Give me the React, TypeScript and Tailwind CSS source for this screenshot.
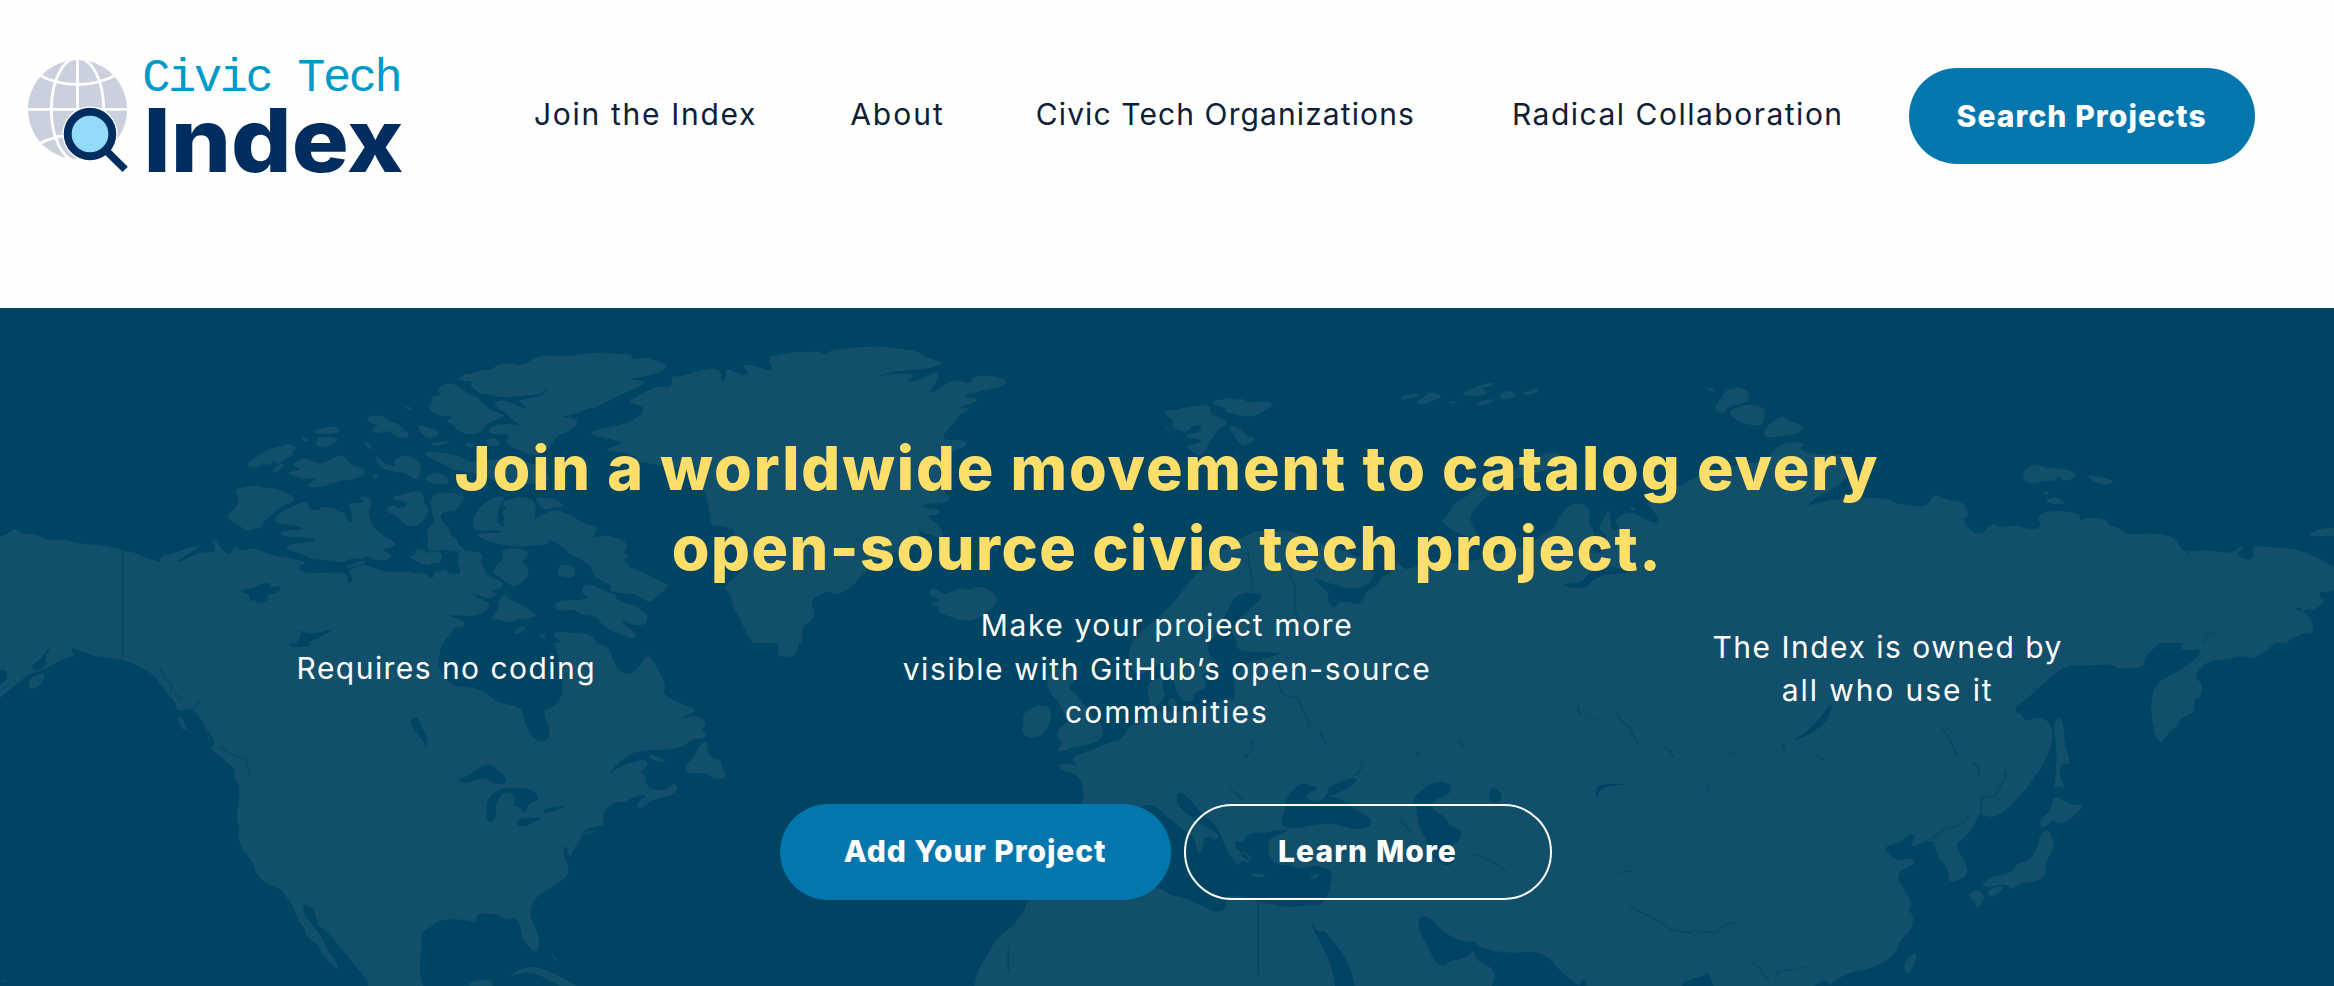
import React from "react";

type Tile = { x: number; y: number; land: string[]; water: string[]; rivers: string[] };

const TILE_W = 1568;
const TILE_H = 1029;

/* The world map is split into six tiles; every outline is a list of x,y pairs. */
const tiles: Tile[] = [
  {
    x: 0,
    y: 300,
    land: [
      "0,708 12,706 25,690 34,686 44,697 48,706 58,700 68,704 78,704 86,716 98,720 125,717 150,727 175,733 195,734 215,740 245,748 250,754 270,756 285,770 310,780 320,788 325,768 340,764 355,757 375,745 395,737 405,736 398,746 378,762 358,782 356,786 375,778 390,762 412,756 430,757 434,748 424,717 436,724 442,740 456,760 464,762 475,733 478,752 495,749 510,744 530,755 550,768 580,774 612,784 616,790 600,798 603,812 620,820 660,818 690,816 700,830 698,848 705,850 710,838 704,822 700,810 720,800 735,793 750,805 775,813 800,817 828,815 835,822 858,818 862,832 872,834 872,820 885,814 895,806 905,824 925,822 926,806 918,790 924,770 915,750 930,752 946,750 955,756 962,755 972,770 965,785 972,800 980,830 1005,840 1014,858 1000,868 985,875 1000,880 990,896 970,890 950,880 960,896 988,908 980,930 960,948 935,948 900,944 915,955 935,965 930,985 915,980 905,1005 890,1029 0,1029",
      "470,568 500,560 515,556 535,564 560,566 600,598 565,620 550,640 528,668 525,686 505,686 495,697 480,672 456,658 462,638 478,615 480,595",
      "612,605 620,612 622,628 640,632 645,620 668,622 685,640 694,635 700,668 708,664 706,628 700,610 718,610 738,605 720,595 732,588 748,598 745,620 740,640 748,675 765,705 790,722 798,738 780,745 765,748 785,762 788,774 770,782 750,778 740,768 722,778 700,776 690,790 660,780 625,778 622,770 590,755 574,745 578,735 610,728 640,722 615,712 590,713 565,706 563,695 590,690 615,685 590,676 560,672 551,662 560,640 590,618",
      "776,622 795,615 800,625 815,622 820,605 790,600 792,588 820,580 830,574 846,575 854,590 850,605 862,625 858,650 845,668 828,684 810,668 795,645 780,638",
      "875,578 900,577 938,585 925,610 918,633 895,633 885,645 888,665 905,685 905,705 920,715 918,735 935,745 935,760 912,752 895,748 870,755 858,745 862,720 857,700 862,680 875,665 868,640 865,600",
      "820,770 835,765 835,745 850,750 860,760 880,752 890,765 885,790 868,788 862,797 845,790",
      "700,795 735,778 735,790 712,802 692,804",
      "1018,590 1000,588 975,605 955,640 950,670 952,690 970,692 1000,690 1015,695 990,700 960,700 962,712 985,725 1020,738 1060,740 1080,735 1105,733 1100,718 1115,725 1135,745 1145,765 1160,770 1175,785 1190,800 1192,830 1205,835 1212,848 1230,855 1225,872 1245,880 1275,880 1295,900 1308,908 1320,890 1340,865 1345,853 1325,845 1305,825 1280,810 1262,800 1265,792 1250,780 1270,770 1250,758 1262,745 1255,720 1235,712 1215,705 1205,710 1190,712 1200,690 1200,678 1182,675 1165,665 1155,650 1140,640 1120,630 1095,638 1080,655 1074,650 1078,630 1076,605 1060,590 1040,590 1025,600 1012,602 1010,615 1020,622 1008,635 1015,655 1010,672 1018,678 1010,682 1000,668 1000,640 1005,615",
      "1075,590 1110,594 1130,610 1135,622 1115,623 1100,628 1090,628 1080,610",
      "1008,745 1040,745 1062,752 1060,770 1048,785 1062,800 1062,830 1048,848 1035,862 1015,845 1000,825 990,820 1000,790 1012,780",
      "1138,793 1157,800 1157,828 1140,834 1120,826 1122,798",
      "1015,880 1025,900 1055,918 1080,945 1070,957 1045,955 1030,968 1010,965 1000,955 988,962 992,945 1002,925 1000,905",
      "1170,860 1190,852 1215,875 1240,882 1235,895 1260,912 1280,915 1285,930 1300,940 1302,965 1290,978 1265,970 1245,955 1260,980 1275,995 1280,1012 1265,1015 1240,1000 1220,985 1205,965 1200,948 1170,945 1150,925 1130,935 1115,925 1118,905 1140,900 1165,900 1185,895 1170,880",
      "1045,978 1060,980 1045,1003 1030,1002",
      "1085,998 1097,1006 1095,1020 1084,1010",
      "1115,995 1150,998 1190,1003 1198,1029 1130,1029 1112,1008",
      "500,485 525,462 545,443 565,440 582,430 598,442 586,455 590,465 570,478 562,495 550,478 542,500 530,485 522,502 498,502",
      "590,488 610,472 625,480 635,490 655,490 665,475 690,463 698,485 712,500 730,500 735,520 720,535 695,540 670,548 640,565 615,558 625,545 640,535 610,538 575,520 590,512 605,510 590,498",
      "752,465 765,475 770,490 790,495 795,510 790,480 815,462 835,478 846,490 845,525 835,542 820,520 790,515 765,505",
      "738,348 770,345 778,360 800,370 808,385 822,400 822,415 800,412 780,390 765,400 745,395 750,380 765,375 740,368",
      "625,395 650,382 675,378 686,390 672,404 640,402",
      "635,412 675,410 680,425 655,443 630,434 640,422",
      "604,410 624,418 612,428",
      "730,418 745,435 750,450 735,442",
      "808,314 832,325 826,334",
      "838,373 858,382 880,388 882,405 862,417 845,400",
      "905,248 925,262 942,285 960,290 968,308 985,330 1015,345 1010,355 990,360 970,385 962,402 938,404 918,390 910,372 895,365 912,350 890,348 870,340 858,320 870,310 865,290 890,285 878,275 885,258",
      "920,235 935,220 950,222 970,208 985,212 1005,190 1030,190 1048,198 1068,180 1085,168 1110,165 1130,170 1160,165 1185,158 1200,160 1220,156 1240,162 1275,163 1265,180 1300,172 1315,182 1348,195 1320,222 1290,232 1258,238 1300,242 1285,262 1245,285 1210,312 1195,325 1178,325 1168,340 1122,350 1160,355 1160,375 1145,395 1118,408 1110,430 1100,450 1075,470 1060,460 1045,450 1030,445 1015,425 1025,410 1010,400 985,405 982,385 1000,372 1030,372 1050,380 1035,365 1015,335 995,320 995,300 1025,305 1045,322 1062,328 1050,312 1040,300 1075,292 1095,285 1098,265 1090,280 1050,290 1000,292 985,282 965,282 955,268 945,260 950,240 930,245",
      "855,455 895,458 930,470 945,490 990,475 1040,480 1090,500 1110,540 1070,555 1000,550 970,520 910,512 890,490 858,472",
      "972,420 1000,413 1008,435 985,442",
      "862,432 895,420 906,430 880,438",
      "932,430 948,426 956,438 944,446",
      "858,525 890,515 908,552 880,553 855,545",
      "748,522 760,522 760,538 748,536",
      "545,515 562,490 574,492 557,518",
      "1348,228 1365,230 1385,222 1410,210 1440,203 1450,215 1450,245 1460,235 1458,205 1475,215 1495,225 1508,222 1490,195 1515,195 1530,205 1555,215 1545,180 1550,168 1568,165 1568,1029 1515,1029 1500,1000 1490,960 1475,930 1470,885 1455,870 1460,850 1495,810 1500,770 1470,715 1480,690 1450,675 1428,680 1425,620 1415,565 1380,510 1310,490 1240,482 1280,478 1270,460 1205,452 1255,430 1240,422 1195,408 1186,395 1215,385 1260,370 1290,345 1295,318 1262,310 1270,300 1300,270 1330,258 1348,265 1352,245",
    ],
    water: [
      "475,872 510,865 525,848 545,850 542,862 568,858 560,878 535,885 540,900 520,912 510,895 498,910 505,885",
      "598,988 625,1005 675,985 640,1015 615,1029 595,1029 608,1005",
      "1200,850 1215,845 1230,858 1215,870",
    ],
    rivers: ["246,750 246,1029"],
  },
  {
    x: 0,
    y: 643,
    land: [
      "0,0 890,0 880,50 885,90 912,130 940,130 975,145 1000,180 1050,190 1055,250 1075,290 1090,300 1103,285 1105,265 1090,200 1110,195 1132,160 1128,90 1120,30 1115,0 1198,0 1228,15 1232,60 1255,95 1280,85 1300,30 1312,50 1325,85 1340,130 1330,148 1352,172 1375,185 1398,200 1395,208 1362,232 1398,215 1415,230 1420,240 1410,262 1422,270 1412,288 1392,288 1365,320 1282,322 1262,340 1240,360 1225,395 1213,410 1235,380 1270,355 1300,350 1302,370 1285,385 1300,400 1298,420 1305,435 1320,442 1340,440 1355,418 1365,438 1345,460 1310,470 1290,498 1278,490 1290,465 1302,460 1285,455 1255,478 1240,475 1215,500 1212,525 1215,548 1195,550 1170,565 1168,590 1155,610 1145,650 1138,600 1130,630 1140,655 1145,690 1130,712 1105,735 1075,765 1065,800 1068,830 1082,870 1085,910 1075,932 1060,905 1048,880 1046,845 1032,820 1018,832 1000,812 985,815 970,810 955,820 960,842 945,832 910,828 880,832 870,850 850,865 845,900 848,920 843,960 845,1010 852,1029 740,1029 738,1010 715,970 685,915 650,855 638,850 632,795 608,783 612,820 630,845 650,890 662,930 680,965 678,982 648,935 640,905 612,875 615,860 598,830 590,790 575,760 565,738 530,718 512,685 510,660 485,615 478,580 482,550 474,525 480,490 482,430 470,400 472,378 450,350 422,315 432,308 428,280 412,255 400,215 380,195 370,205 355,200 352,175 330,145 320,115 305,90 280,70 245,48 210,42 180,38 155,20 150,40 125,48 100,70 85,85 60,90 40,115 0,165",
      "355,220 368,222 370,245 380,268 365,258",
      "60,105 85,88 92,105 75,135 56,140",
      "1020,1003 1050,972 1080,972 1115,992 1160,1029 1125,1029 1090,1000 1060,985",
      "940,1022 960,1010 992,1010 990,1029 945,1029",
      "1108,924 1122,960 1112,950",
      "1422,290 1420,325 1435,348 1448,348 1452,370 1460,395 1455,410 1430,405 1425,390 1375,392 1380,360 1392,350 1405,310",
      "1300,331 1340,350 1335,360 1310,350",
      "1168,572 1194,562 1190,570 1172,576",
      "4,1010 14,1012 10,1020",
    ],
    water: [
      "828,225 840,222 850,262 860,285 858,318 850,290 832,260 825,240",
      "922,408 958,385 970,362 995,368 1000,385 1012,392 1022,425 990,422 972,400 945,420 925,418",
      "1000,440 1030,432 1075,440 1085,472 1062,478 1055,518 1045,490 1030,490 1038,460 1020,445 1005,460 995,485 998,520 988,542 978,530 978,490 982,462",
      "1038,528 1040,550 1060,550 1095,520 1060,525",
      "1090,498 1137,485 1130,497 1093,512",
      "580,0 625,0 620,12 585,12",
      "105,5 95,20 85,45 62,70 72,85 95,65 90,40",
      "0,80 15,80 14,110 0,125",
      "140,12 165,25 185,35 180,42 150,44",
    ],
    rivers: ["246,0 246,48", "440,312 470,335 495,350 503,402", "322,78 330,105 345,125 342,150", "350,150 366,165 362,175", "398,170 398,190 385,200"],
  },
  {
    x: 778,
    y: 300,
    land: [
      "0,165 35,155 60,158 80,152 95,165 105,150 150,142 205,138 240,145 285,155 295,172 333,185 330,195 290,210 245,210 180,235 230,220 278,222 252,250 290,238 315,215 325,222 318,250 300,285 330,262 350,238 370,245 390,252 388,235 410,225 440,230 463,242 450,260 400,275 370,290 400,295 402,305 352,325 388,322 380,335 362,345 358,365 335,395 330,420 360,420 382,425 378,440 340,460 345,500 335,530 340,560 325,560 345,590 345,605 320,608 285,615 295,625 325,625 325,645 298,645 310,660 332,690 330,715 305,705 278,690 290,710 275,740 215,765 185,800 155,850 140,872 110,885 105,870 75,890 65,910 75,930 70,960 50,975 48,1029 0,1029",
      "300,885 312,860 325,875 335,885 350,875 365,862 385,872 400,860 418,862 440,890 440,910 410,950 380,965 345,950 320,935 325,920 302,912 335,900",
      "778,330 800,330 830,318 850,318 855,312 870,320 868,345 885,350 905,365 900,380 885,385 880,400 872,415 858,455 850,470 830,455 818,435 850,430 850,415 820,415 822,402 845,398 855,372 830,380 822,398 800,390 788,375 800,365 780,350",
      "875,300 895,300 905,292 918,300 935,295 945,308 985,303 1000,315 975,335 955,350 935,348 910,342 895,330 905,325 875,315",
      "905,380 918,376 935,395 945,412 962,412 940,440 925,430 918,410",
      "774,372 792,396 788,398",
      "1248,292 1275,280 1297,285 1260,300",
      "1278,310 1300,290 1310,275 1337,288 1320,298 1300,314",
      "1346,303 1367,306 1357,313",
      "1375,278 1400,262 1428,272 1420,287 1385,287",
      "1395,262 1430,246 1444,255 1410,267",
      "1398,312 1430,295 1444,302 1420,317",
      "1446,292 1465,268 1490,285 1465,300",
      "1493,280 1525,263 1532,275 1505,287",
      "1568,455 1540,462 1500,490 1450,540 1400,560 1385,590 1355,612 1350,640 1333,660 1345,680 1370,705 1410,712 1400,690 1390,655 1400,625 1430,580 1460,550 1520,520 1568,500",
      "710,1029 725,1000 760,960 790,915 815,870 840,820 870,785 900,740 940,705 970,690 1000,695 1025,690 1045,700 1060,712 1040,730 1075,720 1100,735 1145,755 1190,790 1198,825 1190,850 1165,868 1130,860 1100,845 1075,832 1090,860 1108,880 1105,905 1120,928 1125,905 1150,905 1165,915 1178,895 1185,870 1205,860 1215,825 1235,820 1230,785 1250,790 1260,810 1285,800 1300,780 1330,790 1400,785 1480,740 1500,745 1540,700 1568,680 1568,1029",
    ],
    water: ["915,895 935,878 970,880 973,895 950,925 925,955 908,990 925,1029 862,1029 880,1010 890,970 905,930"],
    rivers: ["1030,780 1030,830 1040,860 1038,920 1045,960 1040,1000", "945,760 950,820 955,870"],
  },
  {
    x: 778,
    y: 643,
    land: [
      "0,0 42,0 38,30 20,48 0,35",
      "710,0 703,40 708,75 725,98 750,80 770,55 785,75 795,110 802,150 812,175 835,175 835,150 858,140 860,115 850,95 880,70 868,40 862,0",
      "920,0 925,22 960,28 1020,28 990,42 940,60 928,85 915,110 920,165 905,175 870,180 850,205 820,205 790,205 762,205 750,195 742,150 745,118 775,100 772,130 780,160 765,185 750,210 720,235 700,260 690,290 650,305 640,318 600,335 590,350 605,368 585,362 565,362 568,380 600,392 615,430 612,500 520,520 530,620 620,640 650,560 720,500 750,480 775,510 800,545 835,580 840,610 845,640 855,605 858,575 885,595 885,570 850,545 825,515 805,490 800,460 808,445 830,470 850,510 875,540 890,570 895,600 910,640 925,670 930,650 950,665 945,640 920,620 918,590 935,600 945,568 985,570 1000,560 1030,560 1000,578 985,590 985,640 1000,665 1030,665 1050,680 1080,665 1110,680 1115,700 1105,760 1090,790 1060,785 1035,795 980,780 960,775 920,755 900,765 900,800 880,808 840,780 815,762 790,758 765,730 620,700 500,770 495,810 460,865 440,885 425,925 400,985 395,1029 1568,1029 1568,0",
      "548,90 560,75 590,70 605,80 600,110 580,130 605,160 625,210 650,240 655,275 640,300 600,310 555,330 575,295 560,285 565,250 590,235 570,200 565,175 545,150 540,110",
      "490,215 520,185 545,190 550,210 545,255 520,288 488,275 495,240",
      "780,180 790,160 805,180 795,200",
      "943,690 987,695 965,706",
      "1066,702 1094,686 1080,712",
      "925,625 945,630 955,650 940,650",
    ],
    water: [
      "1070,818 1075,850 1090,870 1098,860 1110,885 1130,920 1150,970 1160,1029 1120,1029 1115,980 1095,910 1075,860",
      "1285,820 1310,820 1325,850 1350,880 1385,900 1400,890 1405,910 1440,925 1480,930 1530,925 1568,965 1568,1029 1435,1029 1445,990 1420,960 1400,950 1400,915 1385,945 1345,955 1335,975 1315,945 1310,915 1290,870",
      "1020,500 1010,535 1020,555 1050,555 1090,540 1130,545 1160,560 1185,555 1195,535 1180,515 1150,490 1130,465 1100,460 1130,450 1160,420 1165,405 1140,410 1105,435 1105,455 1085,480 1065,470 1060,455 1090,435 1065,425 1055,418 1035,440 1020,470",
      "1275,470 1295,440 1320,415 1352,420 1352,455 1320,470 1310,490 1330,510 1345,530 1350,550 1375,560 1370,595 1350,610 1360,640 1355,670 1325,660 1310,620 1300,580 1285,540 1285,500",
      "1430,440 1445,432 1458,465 1445,482 1430,475",
      "945,570 985,570 982,590 965,580 960,600 945,590",
    ],
    rivers: ["965,780 965,995", "1002,105 1015,155 1045,165 1058,215 1072,240 1060,260", "1090,265 1100,300", "1175,345 1172,380 1150,410", "1390,630 1430,650 1468,690", "1250,530 1275,570", "950,290 955,315 938,345", "908,435 935,470", "1283,328 1292,338", "1370,290 1378,312", "463,910 463,985"],
  },
  {
    x: 1554,
    y: 300,
    land: [
      "0,680 15,640 40,605 75,622 68,670 85,700 70,750 95,765 110,705 85,685 105,650 107,628 115,640 112,690 135,690 120,665 140,640 165,640 195,668 210,668 205,640 180,600 250,560 300,520 380,490 425,485 440,450 470,422 508,432 490,450 530,465 570,462 600,470 590,540 555,570 520,600 505,620 550,600 600,592 670,595 685,610 720,618 750,620 765,580 785,598 825,605 835,650 820,655 835,690 860,708 878,668 895,682 930,675 960,690 982,680 968,650 1000,630 1060,640 1055,665 1070,650 1115,660 1110,672 1145,690 1150,705 1215,698 1250,715 1258,745 1275,755 1320,750 1360,762 1380,738 1390,745 1370,760 1390,780 1408,775 1402,735 1440,742 1490,745 1530,770 1568,800 1568,870 1545,880 1550,905 1530,930 1500,930 1520,950 1530,1000 1500,1000 1470,1029 0,1029",
      "0,460 15,462 15,490 0,505",
      "322,322 335,300 340,275 374,256 397,285 385,310 350,318 340,340 325,335",
      "348,335 385,310 428,323 422,360 417,380 370,368",
      "418,414 430,372 460,346 470,362 507,380 490,402 455,410",
      "303,263 327,267 315,277",
      "938,525 960,488 990,505 1010,503 1045,513 1050,530 1025,547 1012,520 1010,545 985,540 955,555",
      "1063,523 1100,530 1133,545 1100,557",
      "986,600 1010,588 1032,612 1000,614",
      "979,577 997,573 990,587",
      "1516,702 1540,685 1568,683 1568,708 1525,710",
      "150,625 162,620 165,632 155,632",
    ],
    water: ["75,810 120,798 160,820 100,822 75,845 65,865 20,860 22,850 55,850", "1535,880 1550,872 1560,900 1550,905", "1485,920 1505,925 1500,938"],
    rivers: ["1275,752 1275,772", "1308,1029 1312,1003 1330,998"],
  },
  {
    x: 1554,
    y: 643,
    land: [
      "0,0 1218,0 1185,45 1190,72 1140,80 1120,62 1065,70 1040,65 1010,85 960,155 920,205 940,210 945,235 975,222 1000,240 1003,290 990,350 950,440 890,528 862,515 855,515 850,530 830,580 805,605 825,650 835,700 790,722 795,680 770,640 765,600 755,590 712,618 728,580 715,570 695,600 665,610 668,628 690,655 710,645 732,655 700,680 688,705 705,740 722,785 710,800 725,820 715,870 695,890 690,930 645,975 600,985 560,1015 555,1029 545,1005 525,1029 320,1029 310,982 300,1000 258,1015 258,1029 65,1029 60,1000 50,1029 20,995 0,962",
      "1262,0 1450,0 1430,25 1405,48 1385,38 1345,50 1310,55 1285,105 1305,120 1300,165 1285,170 1290,208 1258,225 1255,250 1240,260 1215,312 1200,230 1202,150 1215,115 1255,85 1290,50 1305,15 1260,25",
      "1015,216 1025,245 1025,290 1040,367 1020,358 1015,395 1028,442 1015,425 1005,442 1010,380 1010,300 1003,250",
      "1003,453 1040,488 1067,483 1045,520 1020,544 1000,530 990,552 976,552 980,525 1000,500",
      "995,556 1008,610 990,650 988,705 965,715 935,722 920,744 912,722 852,736 880,700 920,692 935,653 950,662 975,610 975,575",
      "870,740 906,726 895,752 875,764",
      "833,757 850,736 867,760 860,780 850,800 845,775",
      "725,930 731,940 712,999 702,975 708,945",
    ],
    water: ["560,172 556,215 540,245 510,280 475,294 510,265 535,225", "83,464 85,432 100,423 158,422 105,430 92,440 88,462"],
    rivers: [
      "128,213 130,225 150,250 170,310",
      "780,252 795,290 812,342",
      "908,385 905,410 885,460 860,462 857,520",
      "757,590 775,570 795,548",
      "800,552 818,545 835,515",
      "150,785 165,800 200,825 235,860 275,870 282,862",
      "282,882 290,865 325,870 345,842 370,838",
      "48,192 52,218",
      "65,218 85,232",
      "220,310 235,325 240,345",
      "355,320 358,332 372,338",
      "840,358 852,370 856,395",
      "458,300 464,325",
      "522,332 546,354",
      "395,950 412,975 430,1010",
      "445,1010 450,985 480,980 500,970 512,980",
      "130,695 145,685 160,688",
      "312,418 306,448",
    ],
  },
];

/* Rounds an outline off through its edge midpoints; points on a tile border stay sharp. */
function outline(points: string): string {
  const p = points.split(" ").map((s) => s.split(",").map(Number));
  const n = p.length;
  const edge = ([x, y]: number[]) => x <= 0 || y <= 0 || x >= TILE_W || y >= TILE_H;
  const mid = (a: number[], b: number[]) => `${(a[0] + b[0]) / 2} ${(a[1] + b[1]) / 2}`;
  let d = `M${mid(p[n - 1], p[0])}`;
  for (let i = 0; i < n; i++) {
    const a = p[i];
    const m = mid(a, p[(i + 1) % n]);
    d += edge(a) ? `L${a[0]} ${a[1]}L${m}` : `Q${a[0]} ${a[1]} ${m}`;
  }
  return d + "Z";
}

function WorldMap() {
  return (
    <svg className="absolute inset-0 h-full w-full" viewBox="0 308 2334 678" preserveAspectRatio="none" aria-hidden="true">
      {tiles.map((t, i) => (
        <g key={i} transform={`translate(${t.x} ${t.y}) scale(${780 / TILE_W} ${343 / TILE_H})`}>
          <path d={t.land.map(outline).join("")} fill="#124f6b" />
          <path d={t.water.map(outline).join("")} fill="#004463" />
          {t.rivers.map((r, j) => (
            <polyline key={j} points={r} fill="none" stroke="#004463" strokeOpacity="0.65" strokeWidth="3" strokeLinejoin="round" />
          ))}
        </g>
      ))}
    </svg>
  );
}

function Logo() {
  return (
    <svg className="mt-10 ml-7 h-[140px] w-[380px] shrink-0 overflow-visible" viewBox="28 40 380 140" role="img" aria-label="Civic Tech Index">
      <clipPath id="globe">
        <circle cx="77.5" cy="109.5" r="49.5" />
      </clipPath>
      <g clipPath="url(#globe)">
        <rect x="28" y="60" width="100" height="100" fill="#cad0de" />
        <g fill="none" stroke="#fff" strokeWidth="2.8">
          <path d="M77.5 58V162M26 109.3H130" />
          <ellipse cx="77.5" cy="109.5" rx="26.2" ry="51.5" />
          <path d="M38 74.5Q56 84.5 77.5 84.5T117 74.5M38 144.5Q56 134.5 77.5 134.5T117 144.5" />
        </g>
      </g>
      <circle cx="90" cy="134" r="27.6" fill="#fff" />
      <path d="M106 150.5L125.2 169.4" stroke="#002d5f" strokeWidth="7.4" />
      <circle cx="90" cy="134" r="22.3" fill="#92dbfb" stroke="#002d5f" strokeWidth="7.9" />
      <text x="142.3" y="91" fill="#0099c8" fontFamily="'Liberation Mono', monospace" fontSize="47" textLength="260.5" lengthAdjust="spacing">
        Civic Tech
      </text>
      <text x="143.5" y="171.7" fill="#002d5f" fontFamily="Inter, sans-serif" fontWeight="800" fontSize="88" textLength="260" lengthAdjust="spacingAndGlyphs">
        Index
      </text>
    </svg>
  );
}

export default function App() {
  return (
    <div className="h-[986px] w-[2334px] overflow-hidden bg-white font-['Inter',sans-serif] text-[30px]">
      <header className="flex h-[308px] items-start bg-[#fefefe] whitespace-nowrap">
        <Logo />
        <nav className="mt-[68px] ml-[126px] flex h-24 items-center gap-[93px] pb-1 text-[#0d2035]">
          <a className="tracking-[1.7px]">Join the Index</a>
          <a className="tracking-[2px]">About</a>
          <a className="-ml-0.5 tracking-[1.1px]">Civic Tech Organizations</a>
          <a className="ml-1 tracking-[1.5px]">Radical Collaboration</a>
        </nav>
        <button className="mt-[68px] ml-[65px] h-24 w-[346px] rounded-full bg-[#0476ae] font-extrabold tracking-[1.1px] text-white">Search Projects</button>
      </header>

      <main className="relative h-[678px] bg-[#004463] text-center text-white">
        <WorldMap />
        <div className="relative flex flex-col items-center pt-[120px]">
          <h1 className="text-[61px] leading-[80px] font-extrabold text-[#ffde6a]">
            <span className="block tracking-[1.9px]">Join a worldwide movement to catalog every</span>
            <span className="block tracking-[1.5px]">open-source civic tech project.</span>
          </h1>
          <div className="mt-4 grid w-[2162px] grid-cols-3 items-center leading-[43.5px]">
            <p className="pb-0.5 tracking-[1.45px]">Requires no coding</p>
            <p className="tracking-[1.6px]">
              Make your project more
              <br />
              visible with GitHub’s open-source
              <br />
              <span className="tracking-[2.1px]">communities</span>
            </p>
            <p className="tracking-[1.5px]">
              The Index is owned by
              <br />
              <span className="tracking-[1.9px]">all who use it</span>
            </p>
          </div>
          <div className="mt-[69px] mr-[3px] flex gap-[13px] font-extrabold">
            <button className="h-24 w-[391px] rounded-full bg-[#0476ae] tracking-[0.9px]">Add Your Project</button>
            <button className="h-24 w-[368px] rounded-full border-2 border-white tracking-[1.1px]">Learn More</button>
          </div>
        </div>
      </main>
    </div>
  );
}
